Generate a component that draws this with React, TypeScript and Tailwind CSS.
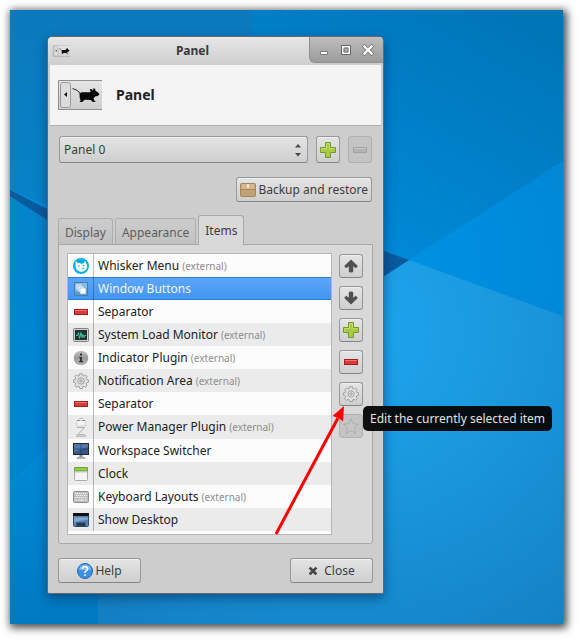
import React from "react";

const raised =
  "border border-[#989898] border-b-[#858585] rounded-[3px] bg-linear-to-b from-[#e4e4e4] to-[#cfcfcf] shadow-[inset_0_1px_0_#f0f0f0]";
const sunken = "border border-[#b0b0b0] rounded-[3px] bg-[#c4c4c4]";

function Plus() {
  return (
    <svg viewBox="0 0 16 16" className="size-4" aria-hidden="true">
      <path d="M5.5.5h5v5h5v5h-5v5h-5v-5h-5v-5h5z" fill="#a9ca45" stroke="#6f9b2c" />
      <path d="M6.5 6.500V1.500h3v5h5" fill="none" stroke="#c6dc68" />
      <path d="M1.500 9.500v-3h5" fill="none" stroke="#c6dc68" />
    </svg>
  );
}

function Minus({ muted = false }: { muted?: boolean }) {
  return (
    <svg viewBox="0 0 16 16" className="size-4" aria-hidden="true">
      <rect x="1.500" y="5.500" width="13" height="5" fill={muted ? "#b4b4b4" : "#dc3a3a"} stroke={muted ? "#a2a2a2" : "#a81c20"} />
      <path d="M2 6.500h12" stroke={muted ? "#c4c4c4" : "#ee7474"} />
    </svg>
  );
}

function Arrow({ down = false }: { down?: boolean }) {
  return (
    <svg viewBox="0 0 16 16" className={down ? "size-4 rotate-180" : "size-4"} aria-hidden="true">
      <path d="M8 1.500l6.800 6.500-2 2.200-2.600-1.900v5.200q0 1-2.200 1t-2.200-1V8.300l-2.600 1.900-2-2.200z" fill="#505050" />
    </svg>
  );
}

function Gear() {
  return (
    <svg viewBox="0 0 16 16" className="size-4" fill="none" stroke="#a0a0a0" aria-hidden="true">
      <path
        d="M6.700.7h2.600l.4 1.900 1.200.5 1.600-1.100 1.700 1.700-1.100 1.600.6 1.300 1.800.3v2.400l-1.800.4-.6 1.200 1.100 1.700-1.700 1.700-1.600-1.100-1.200.5-.4 1.800H6.700l-.4-1.800-1.200-.5-1.700 1.100-1.700-1.700 1.100-1.700-.5-1.200-1.800-.4V6.900l1.800-.3.5-1.300-1.100-1.600L3.400 2l1.700 1.100 1.200-.5z"
        fill="#e2e2e2"
      />
      <circle cx="8" cy="8" r="3.200" />
      <circle cx="8" cy="8" r="1.200" />
    </svg>
  );
}

function Star() {
  return (
    <svg viewBox="0 0 16 16" className="size-4" aria-hidden="true">
      <path d="M8 .8l2.200 5 5.300.5-4 3.600 1.200 5.400L8 12.500l-4.700 2.800 1.200-5.400-4-3.600 5.300-.5z" fill="#c6c6c6" stroke="#adadad" />
    </svg>
  );
}

function Whisker() {
  return (
    <svg viewBox="0 0 16 16" className="size-4" aria-hidden="true">
      <circle cx="8" cy="8" r="8" fill="#09aee0" />
      <path d="M2.800 3l2 2.300q1-.8 2.200-.4l1.200 1 3-.9.8-2.300 1.500 3.500q1.500 2 .3 4.300-1.500 3-5.300 3.200-4.700-.3-5.700-4Q2 6.500 2.800 3z" fill="#fff" />
      <circle cx="6" cy="8" r=".8" fill="#09aee0" />
      <circle cx="10.500" cy="7.500" r=".8" fill="#09aee0" />
      <path d="M8.500 11l2.500-1" stroke="#09aee0" />
    </svg>
  );
}

function Windows() {
  return (
    <svg viewBox="0 0 16 16" className="size-4" aria-hidden="true">
      <rect x="1.500" y="1.500" width="13" height="13" fill="#5c98c8" stroke="#4681b4" />
      <path d="M2 2h12v5L2 11z" fill="#8fbde2" />
      <path d="M3 3h6v6H3z" fill="#dcebf7" stroke="#7eabd0" strokeWidth=".6" />
      <path d="M5 5h6v6H5z" fill="#e8f2fa" stroke="#7eabd0" strokeWidth=".6" />
      <path d="M7 7h6v6H7z" fill="#fff" stroke="#7eabd0" strokeWidth=".6" />
    </svg>
  );
}

function Load() {
  return (
    <svg viewBox="0 0 16 16" className="size-4" aria-hidden="true">
      <rect x=".5" y="1.500" width="15" height="13" rx="1" fill="#d0d0d0" stroke="#808080" />
      <path d="M2 3h12v10H2z" fill="#24302e" />
      <path d="M3 8.500h1.500l1-3 1 6 1.500-6 1 5 1-3 1 3 .6-2H13" fill="none" stroke="#3fc4a4" />
    </svg>
  );
}

function Info() {
  return (
    <svg viewBox="0 0 16 16" className="size-4" aria-hidden="true">
      <defs>
        <linearGradient id="info" x2="0" y2="1">
          <stop stopColor="#c4c4c4" />
          <stop offset=".5" stopColor="#999" />
          <stop offset="1" stopColor="#b4b4b4" />
        </linearGradient>
      </defs>
      <circle cx="8" cy="8" r="7.300" fill="url(#info)" />
      <path d="M7 3.500h2v2H7zM6 7h3v4h1v1.200H6V11h1V8H6z" fill="#333" />
    </svg>
  );
}

function Battery() {
  return (
    <svg viewBox="0 0 16 20" className="h-5 w-4" fill="none" stroke="#b0b0b0" aria-hidden="true">
      <path d="M3.500 9V3.500h9V9z" fill="#f3f3f3" stroke="#d2d2d2" />
      <path d="M6 1.500h4" stroke="#bbb" />
      <path d="M4.500 3.500h2M9.500 3.500h2" stroke="#666" />
      <path d="M4 10.500h7.500L5 17.500" />
      <path d="M3.500 19.300q0-1.800 2-1.800h5q2 0 2 1.800z" fill="#ddd" />
    </svg>
  );
}

function Monitor() {
  return (
    <svg viewBox="0 0 16 16" className="size-4" aria-hidden="true">
      <rect x=".5" y=".5" width="15" height="11" fill="#34598a" stroke="#24282e" />
      <path d="M1 1h14v3L1 9z" fill="#527bad" />
      <path d="M8 1v10M1 6h14" stroke="#1e3c63" strokeWidth=".7" />
      <path d="M6.500 12h3v2h-3z" fill="#888" />
      <path d="M4 14.500q4-1.500 8 0v1H4z" fill="#bbb" stroke="#888" strokeWidth=".5" />
    </svg>
  );
}

function ClockIcon() {
  return (
    <svg viewBox="0 0 16 16" className="size-4" aria-hidden="true">
      <rect x="1.500" y="1.500" width="13" height="13" rx="1" fill="#f5f5f5" stroke="#aaa" />
      <path d="M1.500 5V1.500h13V5z" fill="#94ca48" stroke="#6ba436" />
      <path d="M2 6h12" stroke="#c8c8c8" />
    </svg>
  );
}

function Keyboard() {
  return (
    <svg viewBox="0 0 16 16" className="size-4" aria-hidden="true">
      <rect x=".5" y="2.500" width="15" height="11" rx="1" fill="#bcbcbc" stroke="#929292" />
      <path d="M2 4.500h12M3 6.500h11M2 8.500h12" stroke="#f4f4f4" strokeDasharray="1.300 .7" />
      <path d="M2 11h2m1 0h6m1 0h2" stroke="#f4f4f4" />
    </svg>
  );
}

function Desktop() {
  return (
    <svg viewBox="0 0 16 16" className="size-4" aria-hidden="true">
      <rect x=".5" y="1.500" width="15" height="13" rx="1" fill="#5583b5" stroke="#2c4a70" />
      <path d="M0 1h16v3H0z" fill="#101010" />
      <path d="M1 5.500h14v2L1 10z" fill="#80a7d0" />
      <path d="M3.500 10.500h9v3.500h-9z" fill="#2a3a4a" />
    </svg>
  );
}

function Mouse({ className }: { className: string }) {
  return (
    <svg viewBox="0 0 45 30" className={className} aria-hidden="true">
      <defs>
        <linearGradient id="plate" x2="0" y2="1">
          <stop stopColor="#e6e6e6" />
          <stop offset="1" stopColor="#cdcdcd" />
        </linearGradient>
      </defs>
      <path d="M0 0h44v30H0z" fill="url(#plate)" />
      <path d="M44 .5H.5v29H44" fill="none" stroke="#8e8e8e" />
      <rect x="2.500" y="2.500" width="10" height="25" rx="2" fill="#dcdcdc" stroke="#999" />
      <path d="M9 12v5l-3-2.500z" fill="#111" />
      <path d="M14.500 8.500l5 2 3.500 4" fill="none" stroke="#222" />
      <path d="M21.500 13.500l2-1.300h9l-.6-3.200 2 .3 1 1 .8-2 1.300.4.7 2.300 2.300 1.200 1.500 2.300-2 1.500-2.500.6-1.500 2.200.8 1.600 1.500 1.300-3 .2-2-2-6-.1-1.200 1-1.500 1.200h-2.600l1.200-1.600-1-2.400z" fill="#080808" />
    </svg>
  );
}

function Box() {
  return (
    <svg viewBox="0 0 16 16" className="size-4" aria-hidden="true">
      <rect x=".5" y="1.500" width="15" height="13" rx="1" fill="#c29f74" stroke="#a5845c" />
      <path d="M2 2h12l1 5H1z" fill="#d6b88e" />
      <path d="M1 7.500h14" stroke="#a98558" />
      <path d="M7 2h2v4H7z" fill="#f2e6d0" />
    </svg>
  );
}

function Wallpaper() {
  return (
    <svg viewBox="0 0 553 614" preserveAspectRatio="none" className="absolute inset-0 size-full" aria-hidden="true">
      <defs>
        <linearGradient id="sky" gradientUnits="userSpaceOnUse" x1="340" y1="280" x2="500" y2="0">
          <stop stopColor="#008ddc" />
          <stop offset="1" stopColor="#0075b8" />
        </linearGradient>
        <linearGradient id="left" x2="0" y2="1">
          <stop stopColor="#0b7abc" />
          <stop offset="1" stopColor="#0585cc" />
        </linearGradient>
        <linearGradient id="side" x2="0" y2="1">
          <stop stopColor="#0584ca" />
          <stop offset=".4" stopColor="#0086d2" />
          <stop offset="1" stopColor="#007fca" />
        </linearGradient>
        <linearGradient id="corner" x2="0" y2="1">
          <stop stopColor="#008edc" />
          <stop offset="1" stopColor="#007ac2" />
        </linearGradient>
        <radialGradient id="wedge" gradientUnits="userSpaceOnUse" cx="350" cy="260" r="230">
          <stop stopColor="#0094e6" />
          <stop offset="1" stopColor="#0087d6" />
        </radialGradient>
        <radialGradient id="floor" gradientUnits="userSpaceOnUse" cx="350" cy="320" r="370">
          <stop stopColor="#1ea6ee" />
          <stop offset=".35" stopColor="#1b9ae0" />
          <stop offset="1" stopColor="#1480c4" />
        </radialGradient>
      </defs>
      <path d="M0 0h553v614H0z" fill="url(#sky)" />
      <path d="M0 0h242v280L0 180z" fill="url(#left)" />
      <path d="M0 180l200 100v334H0z" fill="url(#side)" />
      <path d="M399 250L553 151V306z" fill="url(#wedge)" />
      <path d="M200 380L399 250 553 306V614H88V440z" fill="url(#floor)" />
      <path d="M0 472l88-82V614H0z" fill="url(#corner)" />
      <path d="M0 180l37 19 60 30v20L37 210 0 186zM340 229l59 21-59 38z" fill="#0a5a9e" />
    </svg>
  );
}

const items: { name: string; external?: boolean; icon: React.ReactNode; tall?: boolean }[] = [
  { name: "Whisker Menu", external: true, icon: <Whisker /> },
  { name: "Window Buttons", icon: <Windows /> },
  { name: "Separator", icon: <Minus /> },
  { name: "System Load Monitor", external: true, icon: <Load /> },
  { name: "Indicator Plugin", external: true, icon: <Info /> },
  { name: "Notification Area", external: true, icon: <Gear /> },
  { name: "Separator", icon: <Minus /> },
  { name: "Power Manager Plugin", external: true, icon: <Battery />, tall: true },
  { name: "Workspace Switcher", icon: <Monitor /> },
  { name: "Clock", icon: <ClockIcon /> },
  { name: "Keyboard Layouts", external: true, icon: <Keyboard /> },
  { name: "Show Desktop", icon: <Desktop /> },
];

function rowColor(i: number) {
  if (i === 1) return "bg-linear-to-b from-[#5ca6f8] to-[#4095f0] text-[#f0f6ff] shadow-[inset_0_1px_0_#2f7cd6,inset_0_-1px_0_#2f7cd6]";
  return i % 2 ? "bg-[#ebebeb]" : "bg-[#fcfcfc]";
}

function TitleBar() {
  return (
    <header className="flex h-7 items-start rounded-t-[4px] bg-linear-to-b from-[#e6e6e6] to-[#cecece] pl-1">
      <Mouse className="mt-2 h-3 w-5" />
      <h1 className="flex-1 pt-1 pl-1 text-center text-xs leading-5 font-bold text-[#3a3a3a]">Panel</h1>
      <div className="flex h-[26px] w-[74px] items-center justify-center gap-[6px] rounded-tr-[4px] rounded-bl-[6px] border-b border-l border-[#8f8f8f] bg-linear-to-b from-[#bdbdbd] to-[#9c9c9c] pr-px">
        <button aria-label="Minimize" className="size-4">
          <svg viewBox="0 0 16 16"><path d="M4.500 9.500h7v3h-7z" fill="#fff" stroke="#777" /></svg>
        </button>
        <button aria-label="Maximize" className="size-4">
          <svg viewBox="0 0 16 16" fill="none"><path d="M3.500 3.500h9v9h-9z" stroke="#666" /><path d="M4.800 4.800h6.400v6.400H4.800z" stroke="#fff" strokeWidth="1.600" /><path d="M6 6h4v4H6z" stroke="#777" /></svg>
        </button>
        <button aria-label="Close window" className="size-4">
          <svg viewBox="0 0 16 16" fill="none"><path d="M4.500 4.500l7 7M11.500 4.500l-7 7" stroke="#777" strokeWidth="4" strokeLinecap="square" /><path d="M4.500 4.500l7 7M11.500 4.500l-7 7" stroke="#fff" strokeWidth="2.400" strokeLinecap="square" /></svg>
        </button>
      </div>
    </header>
  );
}

export default function App() {
  return (
    <div className="bg-white pt-[10px] pr-4 pb-4 pl-[10px] font-['Noto_Sans','Open_Sans',sans-serif] text-xs leading-5 text-[#3c3c3c]">
      <main className="relative px-[37px] pt-[26px] pb-[30px] shadow-[2px_2px_8px_2px_rgba(0,0,0,0.7)]">
        <Wallpaper />
        <section className="relative w-[337px] max-w-full rounded-t-[6px] rounded-b-[2px] border border-[#686868] bg-[#cdcdcd] shadow-[0_4px_12px_rgba(0,30,70,0.5)]">
          <TitleBar />
          <div className="mx-[2px] flex h-[61px] items-center gap-[13px] border-b border-[#b2b2b2] bg-[#f4f4f4] pl-2">
            <Mouse className="h-[30px] w-[45px]" />
            <h2 className="text-sm font-bold text-[#222]">Panel</h2>
          </div>
          <div className="px-[10px] pt-[10px] pb-[10px]">
            <div className="mx-px flex gap-2">
              <div className="relative h-[27px] flex-1">
                <select aria-label="Panel" className={`size-full appearance-none pl-1 ${raised}`}>
                  <option>Panel 0</option>
                </select>
                <svg viewBox="0 0 8 14" className="pointer-events-none absolute top-[7px] right-[6px] h-[14px] w-2" fill="#4a4a4a" aria-hidden="true">
                  <path d="M1 4.500L4 1l3 3.500zM1 10l3 3.500L7 10z" />
                </svg>
              </div>
              <button aria-label="Add panel" className={`grid h-[27px] w-6 place-items-center ${raised}`}><Plus /></button>
              <button aria-label="Remove panel" disabled className={`grid h-[27px] w-6 place-items-center ${sunken}`}><Minus muted /></button>
            </div>
            <div className="mx-px mt-[14px] flex justify-end">
              <button className={`flex h-[25px] items-center gap-[2px] px-[3px] ${raised}`}><Box />Backup and restore</button>
            </div>
            <div role="tablist" className="mt-[13px] flex items-end gap-[2px]">
              <button role="tab" aria-selected="false" className="h-[26px] rounded-t-[3px] border border-b-0 border-[#adadad] bg-linear-to-b from-[#cdcdcd] to-[#c1c1c1] px-[6px] pt-[2px] text-[#5e5e5e]">Display</button>
              <button role="tab" aria-selected="false" className="h-[26px] rounded-t-[3px] border border-b-0 border-[#adadad] bg-linear-to-b from-[#cdcdcd] to-[#c1c1c1] px-[6px] pt-[2px] text-[#5e5e5e]">Appearance</button>
              <button role="tab" aria-selected="true" className="relative -mb-px h-[30px] rounded-t-[3px] border border-b-0 border-[#a8a8a8] bg-[#d9d9d9] px-[6px]">Items</button>
            </div>
            <div role="tabpanel" className="flex gap-[7px] rounded-b-[3px] border border-[#a8a8a8] bg-[#d9d9d9] p-2 pr-[9px]">
              <ul role="listbox" aria-label="Items" className="flex-1 border border-[#b6b6b6] bg-[#fcfcfc] pb-[3px] text-[#222]">
                {items.map((item, i) => (
                  <li key={i} role="option" aria-selected={i === 1} className={`flex items-center ${item.tall ? "h-6" : "h-[23px]"} ${rowColor(i)}`}>
                    <span className="flex h-full w-[26px] items-center justify-center border-r border-black/25">{item.icon}</span>
                    <span className="pl-1">{item.name}</span>
                    {item.external && <span className="pl-[3px] text-[10px] text-[#8e8e8e]">(external)</span>}
                  </li>
                ))}
              </ul>
              <div className="relative flex flex-col gap-2 pt-px">
                <button aria-label="Move up" className={`grid size-6 place-items-center ${raised}`}><Arrow /></button>
                <button aria-label="Move down" className={`grid size-6 place-items-center ${raised}`}><Arrow down /></button>
                <button aria-label="Add item" className={`grid size-6 place-items-center ${raised}`}><Plus /></button>
                <button aria-label="Remove item" className={`grid size-6 place-items-center ${raised}`}><Minus /></button>
                <button aria-label="Edit item" aria-describedby="tip" className={`grid size-6 place-items-center ${raised}`}><Gear /></button>
                <button aria-label="About item" disabled className={`grid size-6 place-items-center ${sunken}`}><Star /></button>
                <svg viewBox="0 0 74 132" className="pointer-events-none absolute top-[152px] right-[14px] h-[132px] w-[74px]" aria-hidden="true">
                  <path d="M1 129L63 13" stroke="#fe0000" strokeWidth="3" />
                  <path d="M69 1l-1 15.500-4.500-3.500-6-2z" fill="#fe0000" />
                </svg>
                <div id="tip" role="tooltip" className="absolute top-[153px] left-6 z-10 h-[25px] rounded-[5px] bg-[#050505]/95 px-[7px] leading-[25px] whitespace-nowrap text-[#e2e2e2]">
                  Edit the currently selected item
                </div>
              </div>
            </div>
            <div className="mt-[14px] flex justify-between">
              <button className={`flex h-[25px] w-[83px] items-center justify-center gap-[2px] ${raised}`}>
                <svg viewBox="0 0 16 16" className="size-4" fill="none" aria-hidden="true">
                  <circle cx="8" cy="8" r="7.500" fill="#3f8fe4" stroke="#2569b4" />
                  <path d="M2 7a6 5.500 0 0112 0z" fill="#79b6f2" />
                  <path d="M5.500 6q0-2.500 2.500-2.500T10.500 6Q10.500 7.300 8 8.800V10M8 11.300v1.800" stroke="#fff" strokeWidth="1.500" />
                </svg>
                Help
              </button>
              <button className={`flex h-[25px] w-[83px] items-center justify-center gap-[6px] ${raised}`}>
                <svg viewBox="0 0 10 10" className="size-[10px]" aria-hidden="true">
                  <path d="M2.500 2.500l5 5M7.500 2.500l-5 5" stroke="#444" strokeWidth="2.600" strokeLinecap="square" />
                </svg>
                Close
              </button>
            </div>
          </div>
        </section>
      </main>
    </div>
  );
}
